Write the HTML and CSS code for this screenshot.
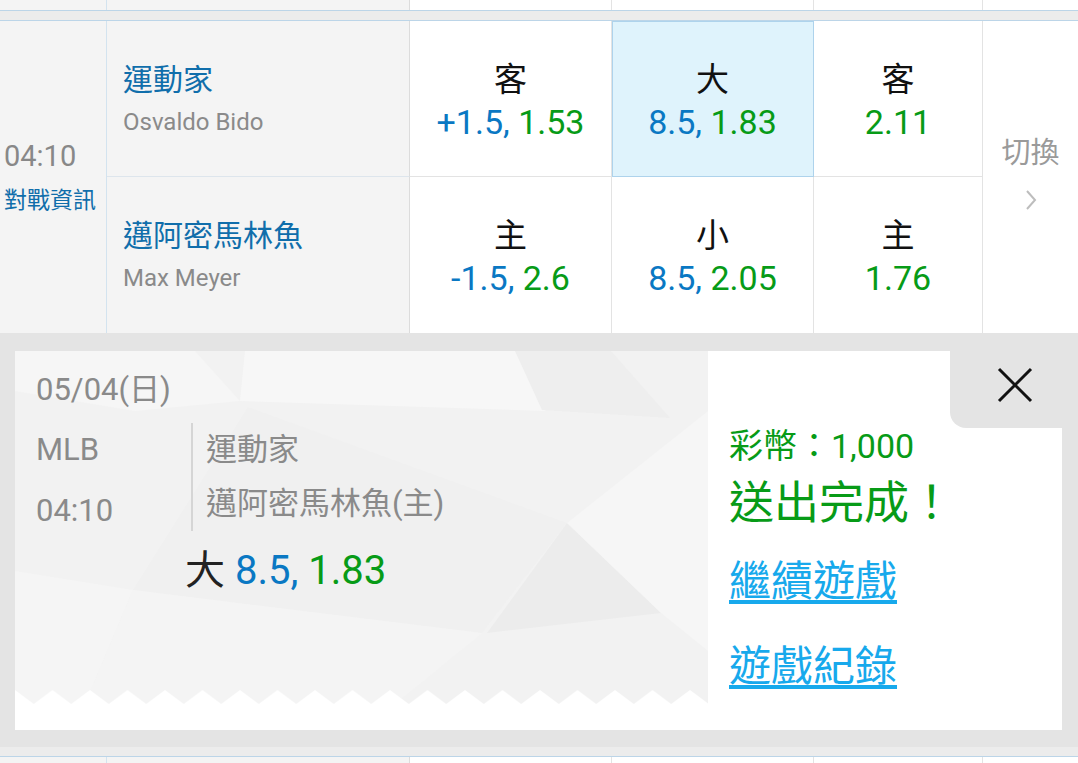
FILE: index.html
```html
<!DOCTYPE html>
<html>
<head>
	<meta charset="UTF-8">
	<meta name="viewport" content="width=device-width,user-scalable=no">
	<title>投注完成</title>
<link rel="stylesheet" href="styles.css">
</head>
<body>
	<section class="board">
		<div class="row row-prev">
			<div class="c c-time"></div>
			<div class="c c-team"></div>
			<div class="c c-odd"></div>
			<div class="c c-odd"></div>
			<div class="c c-odd"></div>
			<div class="c c-switch"></div>
		</div>
		<div class="sep"></div>

		<div class="match">
			<div class="c c-time time-cell">
				<div class="time">04:10</div>
				<a href="javascript:;" class="info">對戰資訊</a>
			</div>

			<div class="c c-team top">
				<div class="team">運動家</div>
				<div class="pitcher">Osvaldo Bido</div>
			</div>
			<div class="c c-odd top">
				<div class="side">客</div>
				<div class="val"><span class="line">+1.5,</span> <span class="price">1.53</span></div>
			</div>
			<div class="c c-odd top picked">
				<div class="side">大</div>
				<div class="val"><span class="line">8.5,</span> <span class="price">1.83</span></div>
			</div>
			<div class="c c-odd top">
				<div class="side">客</div>
				<div class="val"><span class="price">2.11</span></div>
			</div>

			<div class="c c-switch switch-cell">
				<div class="switch">切換</div>
				<svg class="chev" width="12" height="22" viewBox="0 0 12 22"><path d="M2 2L10 11L2 20" fill="none" stroke="#bdbdbd" stroke-width="2"/></svg>
			</div>

			<div class="c c-team">
				<div class="team">邁阿密馬林魚</div>
				<div class="pitcher">Max Meyer</div>
			</div>
			<div class="c c-odd">
				<div class="side">主</div>
				<div class="val"><span class="line">-1.5,</span> <span class="price">2.6</span></div>
			</div>
			<div class="c c-odd">
				<div class="side">小</div>
				<div class="val"><span class="line">8.5,</span> <span class="price">2.05</span></div>
			</div>
			<div class="c c-odd">
				<div class="side">主</div>
				<div class="val"><span class="price">1.76</span></div>
			</div>
		</div>

		<div class="panel">
			<div class="ticket">
				<div class="slip">
					<svg class="slip-bg" width="693" height="379" viewBox="0 0 693 379">
						<defs>
							<pattern id="teeth" x="0" y="339" width="37.5" height="14" patternUnits="userSpaceOnUse">
								<path d="M0 0L18.75 14L37.5 0V14H0Z" fill="#fff"/>
							</pattern>
						</defs>
						<rect width="693" height="353" fill="#f2f2f2"/>
						<polygon points="0,0 180,0 225,50 120,60 0,40" fill="#f6f6f6"/>
						<polygon points="230,0 500,0 530,60 225,50" fill="#f7f7f7"/>
						<polygon points="527,59 655,67 596,0 500,0" fill="#eeeeee"/>
						<polygon points="233,56 118,239 467,282 552,172" fill="#f0f0f0"/>
						<polygon points="552,172 472,282 646,262" fill="#ececec"/>
						<polygon points="0,220 118,239 70,353 0,353" fill="#f5f5f5"/>
						<polygon points="118,239 467,282 380,353 70,353" fill="#f4f4f4"/>
						<polygon points="552,172 693,60 693,300 646,262" fill="#f6f6f6"/>
						<rect y="339" width="693" height="14" fill="url(#teeth)"/>
						<rect y="353" width="693" height="26" fill="#fff"/>
					</svg>
					<div class="date">05/04(日)</div>
					<div class="game">
						<div class="meta">
							<div class="league">MLB</div>
							<div class="kick">04:10</div>
						</div>
						<div class="vs">
							<div>運動家</div>
							<div>邁阿密馬林魚(主)</div>
						</div>
					</div>
					<div class="pick">大 <span class="line">8.5,</span> <span class="price">1.83</span></div>
				</div>

				<div class="result">
					<a href="javascript:;" class="close">
						<svg width="36" height="36" viewBox="0 0 36 36"><path d="M2 2L34 34M34 2L2 34" stroke="#111" stroke-width="3"/></svg>
					</a>
					<div class="coin">彩幣：1,000</div>
					<div class="done">送出完成！</div>
					<a href="javascript:;" class="link link-first">繼續遊戲</a>
					<a href="javascript:;" class="link">遊戲紀錄</a>
				</div>
			</div>
		</div>

		<div class="sep sep-bottom"></div>
		<div class="row row-next">
			<div class="c c-time"></div>
			<div class="c c-team"></div>
			<div class="c c-odd"></div>
			<div class="c c-odd"></div>
			<div class="c c-odd"></div>
			<div class="c c-switch"></div>
		</div>
	</section>
</body>
</html>
```

FILE: styles.css
```css
html,body{
	margin: 0;
	overflow: hidden;
}
body{
	background: #fff;
	font-family: Roboto, "Noto Sans CJK TC", sans-serif;
}
a{
	text-decoration: none;
}
.board{
	width: 1078px;
	height: 763px;
}

/* table grid */
.row,
.match{
	display: grid;
	grid-template-columns: 107px 303px 202px 202px 169px 1fr;
}
.row-prev{
	height: 10px;
}
.row-next{
	height: 40px;
}
.match{
	grid-template-rows: 156px 156px;
}
.c{
	box-sizing: border-box;
	border-right: 1px solid #e3e3e3;
}
.match .c{
	padding-top: 4px;
}
.c-time{
	background: #f4f4f4;
	border-right-color: #d3e3ef;
}
.c-team{
	background: #f4f4f4;
	border-right-color: #dcdcdc;
}
.c-switch{
	border-right: 0;
}
.top{
	border-bottom: 1px solid #e3e3e3;
}
.c-team.top{
	border-bottom-color: #dde5ec;
}
.sep{
	height: 9px;
	background: #ececec;
	border-top: 1px solid #bcd5e8;
	border-bottom: 1px solid #bcd5e8;
}
.sep-bottom{
	border-top: 0;
}

/* time column */
.time-cell{
	grid-row: 1 / 3;
	display: flex;
	flex-direction: column;
	justify-content: center;
	padding-left: 4px;
}
.time{
	font-size: 29px;
	line-height: 44px;
	color: #888;
}
.info{
	font-size: 23px;
	line-height: 46px;
	color: #106eab;
}

/* teams */
.c-team{
	display: flex;
	flex-direction: column;
	justify-content: center;
	padding-left: 16px;
}
.team{
	font-size: 30px;
	line-height: 42px;
	color: #106eab;
}
.pitcher{
	font-size: 24px;
	line-height: 42px;
	color: #8a8a8a;
}

/* odds */
.c-odd{
	display: flex;
	flex-direction: column;
	justify-content: center;
	align-items: center;
}
.side{
	font-size: 33px;
	line-height: 42px;
	color: #111;
}
.val{
	font-size: 34px;
	line-height: 42px;
}
.line{
	color: #0a78c3;
}
.price{
	color: #079b17;
}
.picked{
	background: #dff3fc;
	outline: 1px solid #aed3ec;
	outline-offset: -1px;
}

/* switch */
.switch-cell{
	grid-row: 1 / 3;
	grid-column: 6;
	display: flex;
	flex-direction: column;
	justify-content: center;
	align-items: center;
	padding-bottom: 15px;
}
.switch{
	font-size: 29px;
	line-height: 40px;
	color: #9a9a9a;
}
.chev{
	display: block;
	margin-top: 16px;
}

/* bet result panel */
.panel{
	background: #e4e4e4;
	padding: 18px 16px 17px 15px;
}
.ticket{
	display: flex;
	height: 379px;
}
.slip{
	width: 693px;
	position: relative;
	box-sizing: border-box;
	padding: 19px 0 0 21px;
	color: #8a8a8a;
	font-size: 31px;
}
.slip-bg{
	position: absolute;
	left: 0;
	top: 0;
	z-index: 0;
}
.slip > div{
	position: relative;
}
.date{
	line-height: 40px;
}
.game{
	display: flex;
	align-items: flex-start;
	margin-top: 13px;
}
.meta{
	width: 155px;
}
.league{
	line-height: 54px;
}
.kick{
	line-height: 54px;
	margin-top: 7px;
}
.vs{
	border-left: 2px solid #d5d5d5;
	padding-left: 13px;
	line-height: 54px;
}
.pick{
	margin: 8px 0 0 149px;
	font-size: 40px;
	line-height: 50px;
	color: #222;
}

.result{
	flex: 1;
	background: #fff;
	display: flex;
	flex-direction: column;
	align-items: flex-start;
	padding-left: 21px;
}
.close{
	align-self: flex-end;
	box-sizing: border-box;
	width: 112px;
	height: 77px;
	background: #e4e4e4;
	border-bottom-left-radius: 16px;
	display: flex;
	justify-content: flex-end;
	padding: 16px 29px 0 0;
}
.close svg{
	display: block;
}
.coin{
	font-size: 34px;
	line-height: 36px;
	color: #079b17;
}
.done{
	font-size: 45px;
	line-height: 56px;
	margin-top: 12px;
	color: #079b17;
}
.link{
	font-size: 42px;
	line-height: 56px;
	color: #17a9ec;
	text-decoration: underline;
	text-underline-offset: 4px;
	margin-top: 29px;
}
.link-first{
	margin-top: 22px;
}
```
